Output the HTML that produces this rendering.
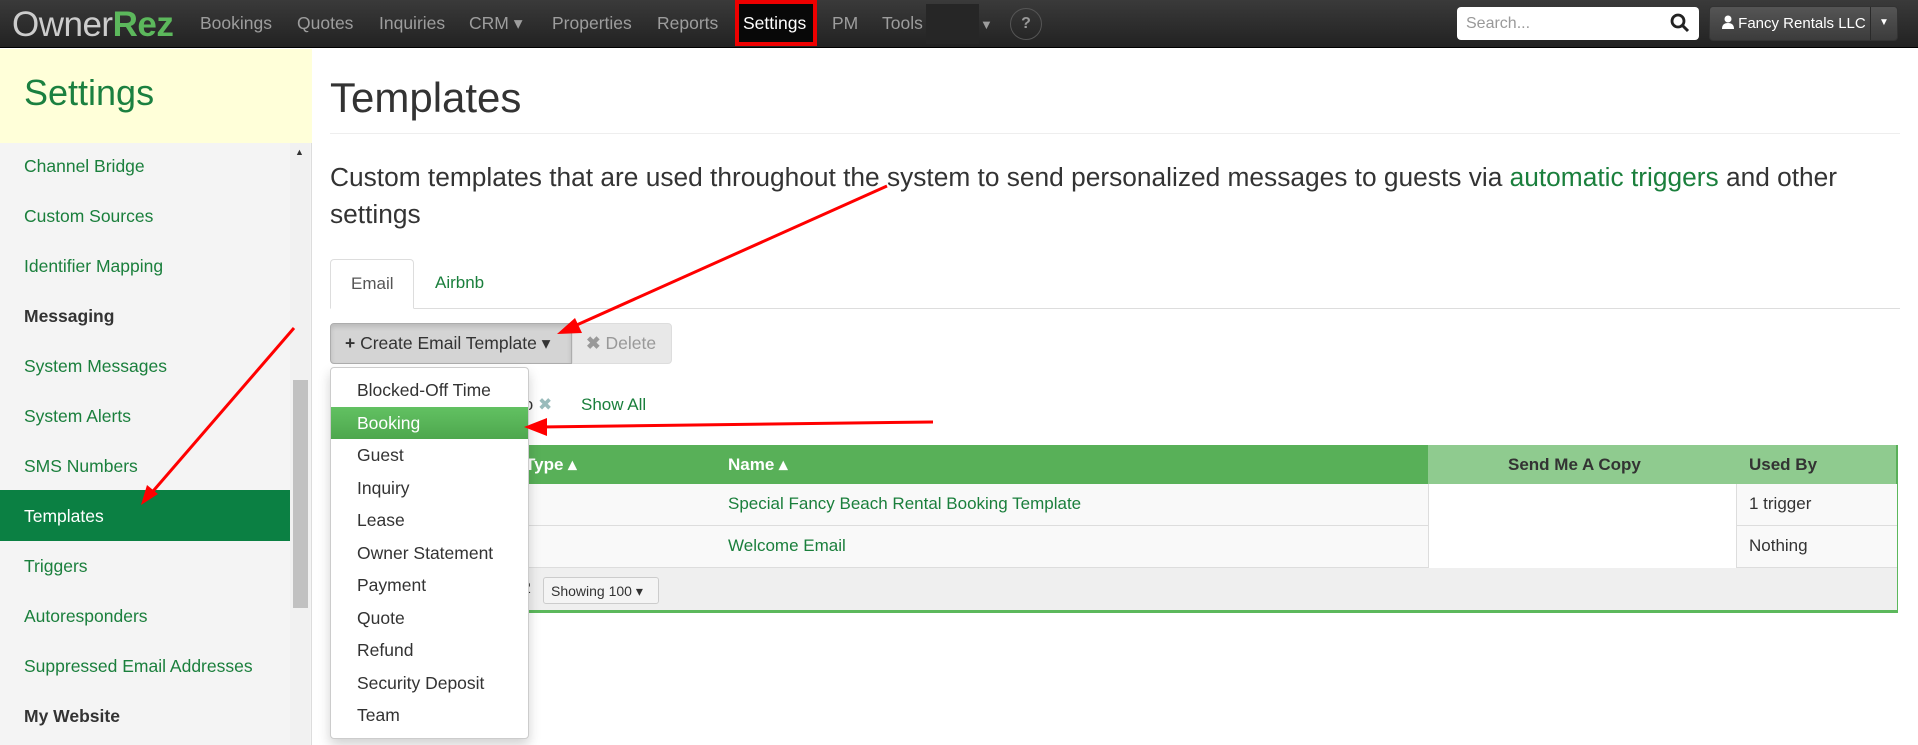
<!DOCTYPE html><html><head><style>
*{box-sizing:border-box;margin:0;padding:0}
body{width:1918px;height:745px;overflow:hidden;font-family:"Liberation Sans",Arial,sans-serif;background:#fff;position:relative}
.abs{position:absolute;white-space:nowrap}
.nav{left:0;top:0;width:1918px;height:48px;background:linear-gradient(#3a3a3a,#222);border-bottom:1px solid #000}
.ni{position:absolute;top:13px;color:#9d9d9d;font-size:17.5px}
.side{left:0;top:49px;width:312px;height:696px;background:#f4f4f4;border-right:1px solid #ddd}
.sh{left:0;top:49px;width:312px;height:94px;background:#ffffd9;color:#1b8040;font-size:36px;padding:23px 0 0 24px}
.si{position:absolute;left:24px;color:#1a7f3c;font-size:17.5px}
.g{color:#1a7f3c}
.dd div{height:32.5px;line-height:32.5px;padding-left:26px;font-size:17.5px;color:#333}
</style></head><body>
<div class="abs nav">
<div class="abs" style="left:12px;top:5px;font-size:35px;color:#ccc;letter-spacing:-0.5px">Owner<span style="color:#5cb85c;font-weight:700">Rez</span></div>
<span class="ni" style="left:200px">Bookings</span>
<span class="ni" style="left:297px">Quotes</span>
<span class="ni" style="left:379px">Inquiries</span>
<span class="ni" style="left:469px">CRM ▾</span>
<span class="ni" style="left:552px">Properties</span>
<span class="ni" style="left:657px">Reports</span>
<div class="abs" style="left:735px;top:0;width:82px;height:46px;background:#080808;border:4px solid #e00"></div>
<span class="ni" style="left:743px;color:#fff">Settings</span>
<span class="ni" style="left:832px">PM</span>
<span class="ni" style="left:882px">Tools</span>
<div class="abs" style="left:926px;top:4px;width:53px;height:40px;background:#262626"></div>
<span class="ni" style="left:980px;font-size:13px;top:17px">▼</span>
<div class="abs" style="left:1010px;top:8px;width:32px;height:32px;border:1px solid #555;border-radius:50%;color:#999;font-weight:bold;text-align:center;line-height:30px;font-size:16px">?</div>
<div class="abs" style="left:1457px;top:7px;width:242px;height:33px;background:#fff;border-radius:4px;color:#999;font-size:16px;padding:8px 9px">Search...<svg style="position:absolute;right:9px;top:6px" width="20" height="20" viewBox="0 0 20 20"><circle cx="8" cy="8" r="6" fill="none" stroke="#222" stroke-width="2.8"/><line x1="12.5" y1="12.5" x2="18" y2="18" stroke="#222" stroke-width="3"/></svg></div>
<div class="abs" style="left:1709px;top:6px;width:189px;height:35px;background:linear-gradient(#555,#3c3c3c);border:1px solid #333;border-radius:4px;color:#fff;font-size:15px;padding:8px 0 0 12px"><svg width="12" height="14" viewBox="0 0 12 14" style="vertical-align:-1px"><circle cx="6" cy="4" r="3.5" fill="#fff"/><path d="M0 14 Q0 8 6 8 Q12 8 12 14Z" fill="#fff"/></svg> Fancy Rentals LLC<span style="position:absolute;left:160px;top:0;width:1px;height:33px;background:#2a2a2a"></span><span style="position:absolute;left:169px;top:10px;font-size:10px">▼</span></div>
</div>
<div class="abs side"></div>
<div class="abs sh">Settings</div>
<div class="abs" style="left:290px;top:143px;width:20px;height:602px;background:#f1f1f1"></div>
<div class="abs" style="left:293px;top:380px;width:15px;height:228px;background:#c1c1c1"></div>
<div class="abs" style="left:295px;top:147px;font-size:9px;color:#333">▲</div>
<div class="si" style="top:156px">Channel Bridge</div>
<div class="si" style="top:206px">Custom Sources</div>
<div class="si" style="top:256px">Identifier Mapping</div>
<div class="si" style="top:306px;color:#333;font-weight:bold">Messaging</div>
<div class="si" style="top:356px">System Messages</div>
<div class="si" style="top:406px">System Alerts</div>
<div class="si" style="top:456px">SMS Numbers</div>
<div class="abs" style="left:0;top:490px;width:290px;height:51px;background:#0b8043"></div>
<div class="si" style="top:506px;color:#fff">Templates</div>
<div class="si" style="top:556px">Triggers</div>
<div class="si" style="top:606px">Autoresponders</div>
<div class="si" style="top:656px">Suppressed Email Addresses</div>
<div class="si" style="top:706px;color:#333;font-weight:bold">My Website</div>

<div class="abs" style="left:330px;top:74px;font-size:42px;color:#333">Templates</div>
<div class="abs" style="left:330px;top:133px;width:1570px;height:1px;background:#eee"></div>
<div class="abs" style="left:330px;top:159px;width:1540px;white-space:normal;font-size:26.3px;color:#333;line-height:37px">Custom templates that are used throughout the system to send personalized messages to guests via <span class="g">automatic triggers</span> and other settings</div>
<div class="abs" style="left:330px;top:308px;width:1570px;height:1px;background:#ddd"></div>
<div class="abs" style="left:330px;top:259px;width:84px;height:50px;background:#fff;border:1px solid #ddd;border-bottom-color:#fff;border-radius:4px 4px 0 0;font-size:17px;color:#555;padding:14px 0 0 20px">Email</div>
<div class="abs g" style="left:435px;top:273px;font-size:17px">Airbnb</div>
<div class="abs" style="left:330px;top:323px;width:242px;height:41px;background:#d4d4d4;border:1px solid #adadad;border-radius:4px 0 0 4px;font-size:17.5px;color:#333;padding:9px 0 0 14px;box-shadow:inset 0 3px 5px rgba(0,0,0,.12)"><b>+</b> Create Email Template ▾</div>
<div class="abs" style="left:572px;top:323px;width:100px;height:41px;background:#e8e8e8;border:1px solid #ddd;border-radius:0 4px 4px 0;font-size:17.5px;color:#999;padding:9px 0 0 13px"><b>✖</b> Delete</div>
<div class="abs" style="left:520px;top:395px;font-size:17px;color:#333">lo <span style="color:#9bb">✖</span></div>
<div class="abs g" style="left:581px;top:395px;font-size:17px">Show All</div>
<div class="abs" style="left:330px;top:445px;width:1568px;height:168px;border:1px solid #5cb85c;border-bottom:3px solid #5cb85c"></div>
<div class="abs" style="left:330px;top:445px;width:1568px;height:39px;background:#58b058"></div>
<div class="abs" style="left:1428px;top:445px;width:468px;height:39px;background:#8fcb8f"></div>
<div class="abs" style="left:525px;top:455px;color:#fff;font-weight:bold;font-size:17px">Type ▴</div>
<div class="abs" style="left:728px;top:455px;color:#fff;font-weight:bold;font-size:17px">Name ▴</div>
<div class="abs" style="left:1508px;top:455px;color:#333;font-weight:bold;font-size:17px">Send Me A Copy</div>
<div class="abs" style="left:1749px;top:455px;color:#333;font-weight:bold;font-size:17px">Used By</div>
<div class="abs" style="left:331px;top:484px;width:1566px;height:42px;background:#f9f9f9;border-bottom:1px solid #ddd"></div>
<div class="abs" style="left:331px;top:526px;width:1566px;height:42px;background:#f9f9f9;border-bottom:1px solid #ddd"></div>
<div class="abs" style="left:1428px;top:484px;width:309px;height:84px;background:#fff;border-left:1px solid #ddd;border-right:1px solid #ddd"></div>
<div class="abs g" style="left:728px;top:494px;font-size:17px">Special Fancy Beach Rental Booking Template</div>
<div class="abs g" style="left:728px;top:536px;font-size:17px">Welcome Email</div>
<div class="abs" style="left:1749px;top:494px;font-size:17px;color:#333">1 trigger</div>
<div class="abs" style="left:1749px;top:536px;font-size:17px;color:#333">Nothing</div>
<div class="abs" style="left:331px;top:568px;width:1566px;height:42px;background:#efefef"></div>
<div class="abs" style="left:522px;top:580px;font-size:16px;color:#333">2</div>
<div class="abs" style="left:543px;top:577px;width:116px;height:27px;background:#f4f4f4;border:1px solid #ccc;border-radius:3px;font-size:14px;color:#333;padding:5px 0 0 7px">Showing 100 ▾</div>
<div class="abs dd" style="left:330px;top:367px;width:199px;height:372px;background:#fff;border:1px solid #ccc;border-radius:4px;box-shadow:0 6px 12px rgba(0,0,0,.18);padding-top:6px">
<div>Blocked-Off Time</div><div style="background:linear-gradient(#62c162,#4ea74e);color:#fff">Booking</div><div>Guest</div><div>Inquiry</div><div>Lease</div><div>Owner Statement</div><div>Payment</div><div>Quote</div><div>Refund</div><div>Security Deposit</div><div>Team</div></div>
<svg class="abs" style="left:0;top:0" width="1918" height="745"><g stroke="#f00" stroke-width="3" fill="#f00">
<line x1="887" y1="186" x2="570" y2="328"/><polygon points="557,334 575,318 582,333" stroke="none"/>
<line x1="294" y1="328" x2="148" y2="497"/><polygon points="141,505 147,485 158,494" stroke="none"/>
<line x1="933" y1="422" x2="540" y2="427"/><polygon points="524,427 547,418 547,436" stroke="none"/></g></svg>
</body></html>
